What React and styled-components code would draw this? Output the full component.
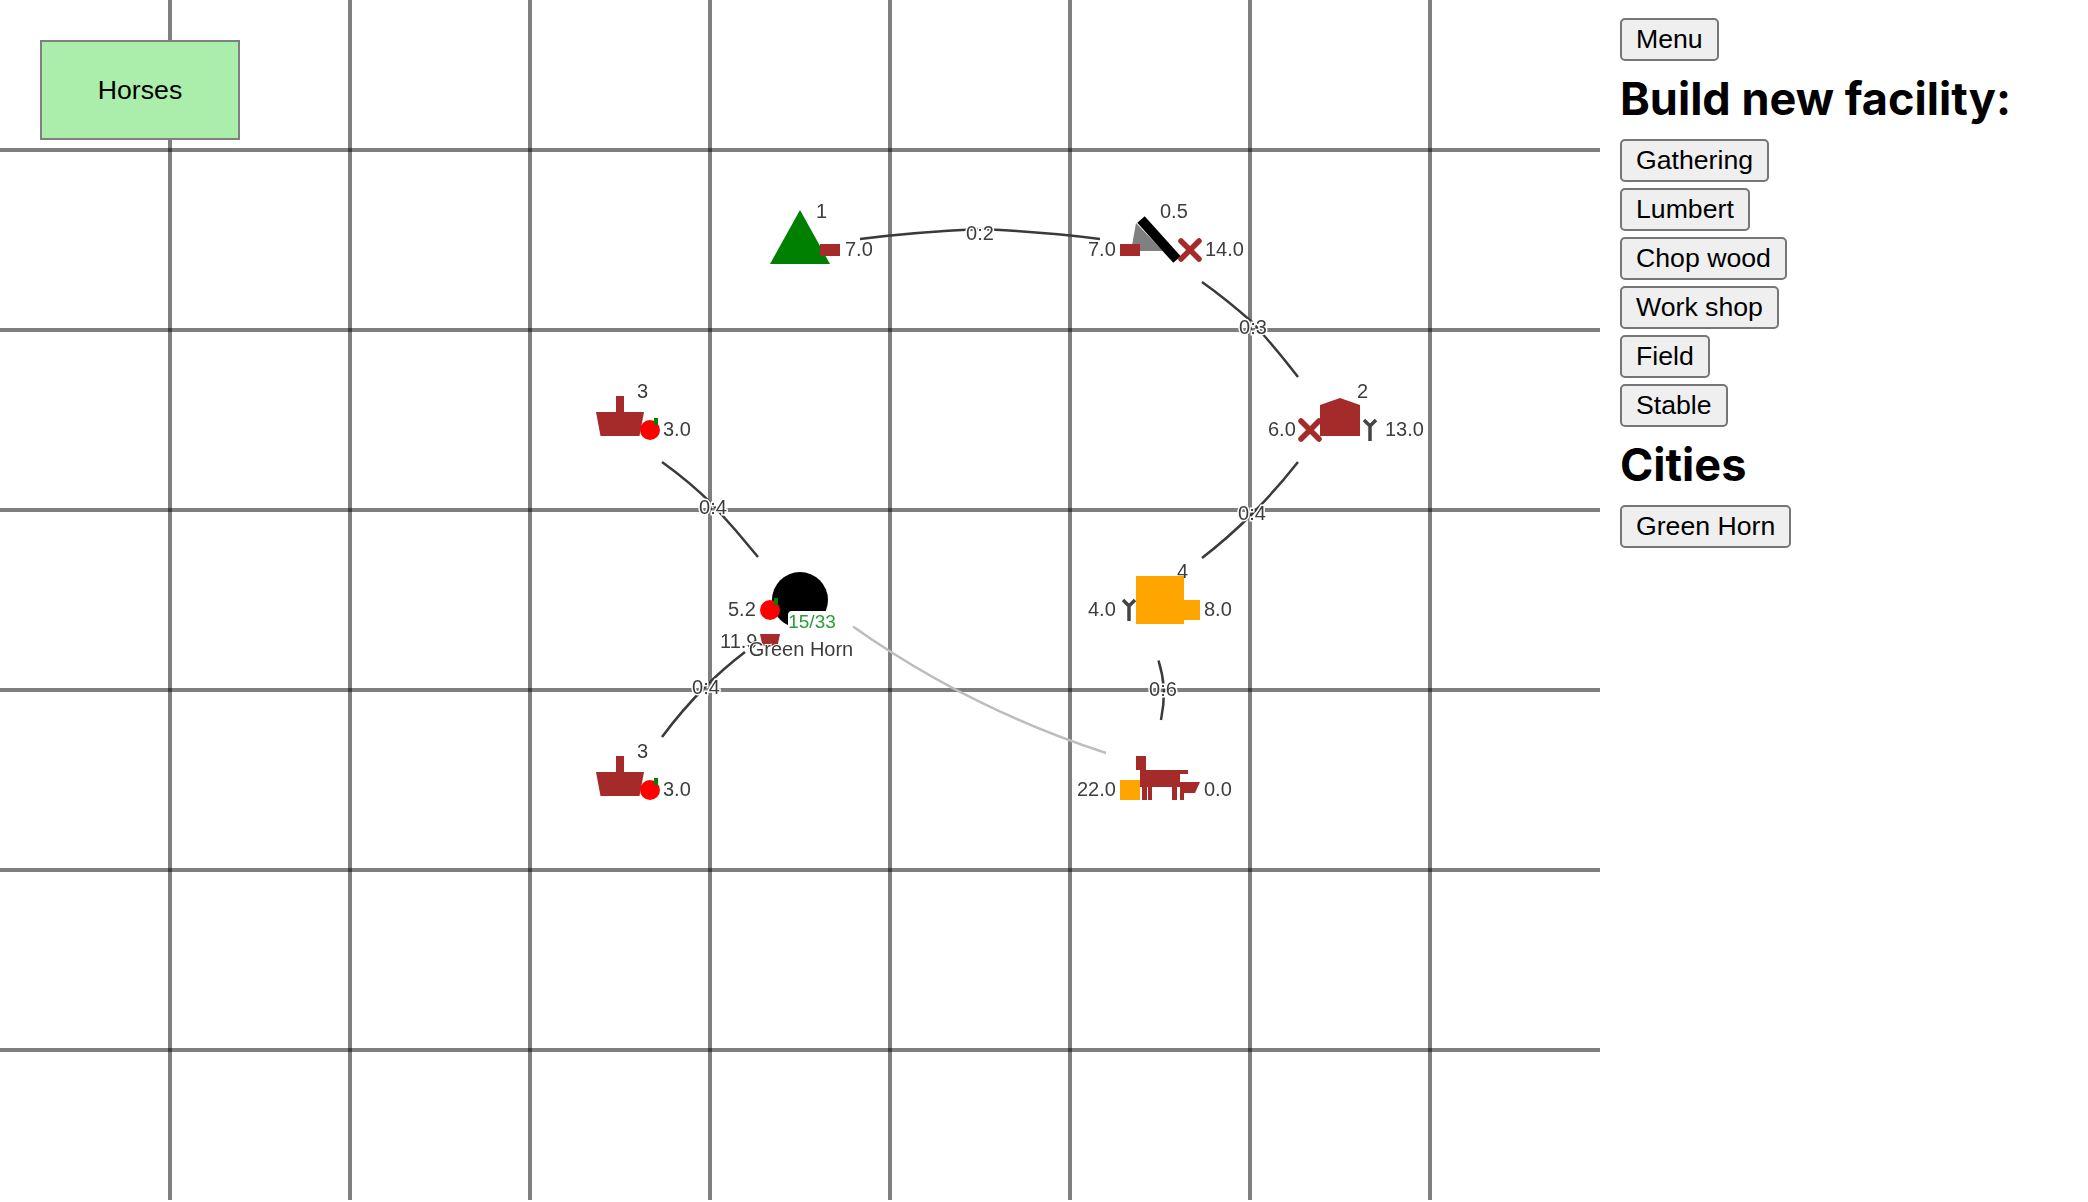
import React from "react";
import styled, { createGlobalStyle } from "styled-components";

const GlobalStyle = createGlobalStyle`
  html, body {
    margin: 0;
    background: white;
    overflow: hidden;
  }
`;

const Page = styled.div`
  display: flex;
  width: 2088px;
  height: 1202px;
`;

const MapContainer = styled.div`
  position: relative;
  flex: none;
  width: 1600px;
  height: 1200px;
`;

const MapCanvas = styled.svg`
  display: block;
  filter: blur(0.7px);
`;

const ResourceBox = styled.div`
  position: absolute;
  left: 40px;
  top: 40px;
  box-sizing: border-box;
  width: 200px;
  height: 100px;
  display: flex;
  align-items: center;
  justify-content: center;
  background-color: #abeeab;
  border: 2px solid #808080;
  font-family: "Liberation Sans", Arial, sans-serif;
  font-size: 26.67px;
  color: black;
`;

const Sidebar = styled.div`
  flex: 1;
  display: flex;
  flex-direction: column;
  align-items: flex-start;
  gap: 6px;
  padding: 18px 0 0 20px;
`;

const SideButton = styled.button`
  box-sizing: border-box;
  height: 43px;
  padding: 0 14px;
  background-color: #efefef;
  border: 2px solid #767676;
  border-radius: 5px;
  font-family: "Liberation Sans", Arial, sans-serif;
  font-size: 26.67px;
  color: black;
`;

const Heading = styled.h1`
  margin: 5px 0 7px;
  height: 54px;
  line-height: 54px;
  font-family: Inter, sans-serif;
  font-size: 45.1px;
  font-weight: 700;
  color: black;
`;

const GridLine = styled.line`
  stroke: rgba(0, 0, 0, 0.5);
  stroke-width: 4;
`;

const Edge = styled.path`
  fill: none;
  stroke: ${({ $faded }) => ($faded ? "#bdbdbd" : "#3a3a3a")};
  stroke-width: 2.5;
`;

const MapText = styled.text`
  font-family: "Liberation Sans", Arial, sans-serif;
  font-size: ${({ $size }) => $size || 20}px;
  fill: ${({ $color }) => $color || "#3d3d3d"};
  text-anchor: ${({ $anchor }) => $anchor || "start"};
`;

const HaloText = styled(MapText)`
  paint-order: stroke;
  stroke: white;
  stroke-width: ${({ $halo }) => $halo || 4}px;
  text-anchor: middle;
`;

const BROWN = "#a52a2a";
const ORANGE = "#ffa500";

const verticals = [170, 350, 530, 710, 890, 1070, 1250, 1430];
const horizontals = [150, 330, 510, 690, 870, 1050];

const edges = [
  { d: "M860 239 Q915 232 980 229 Q1045 232 1100 239", label: "0:2", x: 980, y: 240 },
  { d: "M1202 282 Q1226 299 1252 322 Q1274 346 1298 377", label: "0:3", x: 1253, y: 334 },
  { d: "M1298 462 Q1276 490 1252 514 Q1228 538 1202 558", label: "0:4", x: 1252, y: 520 },
  { d: "M1158.5 660.5 Q1163 675 1164 690 Q1164 705 1161 720", label: "0:6", x: 1163, y: 696 },
  { d: "M745 652 Q724 668 706 686 Q682 710 662 737", label: "0:4", x: 706, y: 694 },
  { d: "M662 462 Q690 482 713 505 Q736 530 758 557", label: "0:4", x: 713, y: 514 },
];

const labels = [
  { x: 816, y: 218, text: "1" },
  { x: 845, y: 256, text: "7.0" },
  { x: 1088, y: 256, text: "7.0" },
  { x: 1160, y: 218, text: "0.5" },
  { x: 1205, y: 256, text: "14.0" },
  { x: 1357, y: 398, text: "2" },
  { x: 1268, y: 436, text: "6.0" },
  { x: 1385, y: 436, text: "13.0" },
  { x: 637, y: 398, text: "3" },
  { x: 663, y: 436, text: "3.0" },
  { x: 637, y: 758, text: "3" },
  { x: 663, y: 796, text: "3.0" },
  { x: 1177, y: 578, text: "4" },
  { x: 1088, y: 616, text: "4.0" },
  { x: 1204, y: 616, text: "8.0" },
  { x: 1077, y: 796, text: "22.0" },
  { x: 1204, y: 796, text: "0.0" },
  { x: 728, y: 616, text: "5.2" },
  { x: 720, y: 648, text: "11.9" },
];

const buildings = ["Gathering", "Lumbert", "Chop wood", "Work shop", "Field", "Stable"];

const Brick = ({ x, y }) => <rect x={x} y={y} width="20" height="12" fill={BROWN} />;

const Apple = ({ x, y }) => (
  <g>
    <circle cx={x} cy={y} r="10" fill="red" />
    <rect x={x + 4} y={y - 12} width="4" height="7" fill="green" />
  </g>
);

const Planks = ({ x, y }) => (
  <path
    d={`M${x - 9} ${y - 9} L${x + 9} ${y + 9} M${x + 9} ${y - 9} L${x - 9} ${y + 9}`}
    stroke={BROWN}
    strokeWidth="5.5"
    strokeLinecap="round"
  />
);

const Tool = ({ x, y }) => (
  <path
    d={`M${x - 6} ${y + 1} L${x} ${y + 7} L${x + 6} ${y + 1} M${x} ${y + 7} V${y + 22}`}
    stroke="#444"
    strokeWidth="3.5"
    fill="none"
  />
);

const Basket = ({ y }) => (
  <path
    d={`M616 ${y} H624 V${y + 16} H644 L639.5 ${y + 40} H600.5 L596 ${y + 16} H616 Z`}
    fill={BROWN}
  />
);

const App = () => {
  return (
    <Page>
      <GlobalStyle />
      <MapContainer>
        <MapCanvas width="1600" height="1200" viewBox="0 0 1600 1200">
          {verticals.map((x) => (
            <GridLine key={x} x1={x} x2={x} y1="0" y2="1200" />
          ))}
          {horizontals.map((y) => (
            <GridLine key={y} x1="0" x2="1600" y1={y} y2={y} />
          ))}

          {edges.map((edge) => (
            <Edge key={edge.d} d={edge.d} />
          ))}
          <Edge $faded d="M853 626.5 Q968 708 1106 753" />
          {edges.map((edge) => (
            <HaloText key={edge.d} x={edge.x} y={edge.y} $halo={3}>
              {edge.label}
            </HaloText>
          ))}

          {/* gathering */}
          <path d="M800 210 L830 264 H770 Z" fill="green" />
          <Brick x={820} y={244} />

          {/* lumber */}
          <path d="M1136 223 L1131 251 H1163 Z" fill="#808080" />
          <path d="M1141 219.5 L1177 259.5" stroke="black" strokeWidth="10" />
          <Brick x={1120} y={244} />
          <Planks x={1190} y={250} />

          {/* workshop */}
          <path d="M1320 405 L1340 398 L1360 405 V436 H1320 Z" fill={BROWN} />
          <Planks x={1310} y={430} />
          <Tool x={1370} y={419} />

          {/* fields */}
          <Basket y={396} />
          <Apple x={650} y={430} />
          <Basket y={756} />
          <Apple x={650} y={790} />

          {/* carpenter */}
          <path d="M1136 576 H1184 V600 H1200 V620 H1184 V624 H1136 Z" fill={ORANGE} />
          <Tool x={1129} y={599} />

          {/* stable */}
          <rect x="1120" y="780" width="20" height="20" fill={ORANGE} />
          <path
            d="M1136 756 H1146 V770 H1188 V774 H1180 V787 H1177 V800 H1172 V787 H1152 V800 H1148 V787 H1147 V800 H1142 V787 H1140 V770 H1136 Z"
            fill={BROWN}
          />
          <path d="M1180 782 H1200 L1195 793 H1184 V800 H1180 Z" fill={BROWN} />

          {/* city */}
          <circle cx="800" cy="600" r="28" fill="black" />
          <rect x="788" y="611" width="46" height="22" rx="4" fill="white" />
          <Apple x={770} y={610} />
          <path d="M760 634 H780 L777.5 646 H762.5 Z" fill={BROWN} />

          {labels.map((label) => (
            <MapText key={`${label.x}-${label.y}`} x={label.x} y={label.y}>
              {label.text}
            </MapText>
          ))}
          <MapText x={812} y={628} $size={19} $color="#2a9e3a" $anchor="middle">
            15/33
          </MapText>
          <HaloText x={801} y={656} $halo={2}>
            Green Horn
          </HaloText>
        </MapCanvas>
        <ResourceBox>Horses</ResourceBox>
      </MapContainer>

      <Sidebar>
        <SideButton>Menu</SideButton>
        <Heading>Build new facility:</Heading>
        {buildings.map((name) => (
          <SideButton key={name}>{name}</SideButton>
        ))}
        <Heading>Cities</Heading>
        <SideButton>Green Horn</SideButton>
      </Sidebar>
    </Page>
  );
};

export default App;
